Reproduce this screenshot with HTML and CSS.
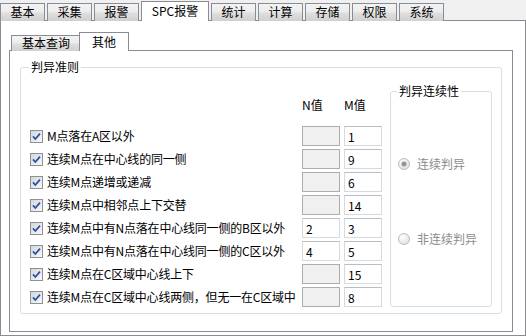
FILE: index.html
```html
<!DOCTYPE html>
<html lang="zh-CN">
<head>
  <meta charset="UTF-8">
  <title>SPC报警</title>
  <link rel="stylesheet" href="styles.css">
</head>
<body>

  <div class="tabs">
    <div class="tab">基本</div>
    <div class="tab">采集</div>
    <div class="tab">报警</div>
    <div class="tab active">SPC报警</div>
    <div class="tab">统计</div>
    <div class="tab">计算</div>
    <div class="tab">存储</div>
    <div class="tab">权限</div>
    <div class="tab">系统</div>
  </div>

  <div class="page">
    <div class="subtabs">
      <div class="tab">基本查询</div>
      <div class="tab active">其他</div>
    </div>

    <div class="subpage">
      <fieldset class="group rules">
        <legend>判异准则</legend>
        <div class="rules-body">

          <div class="rule-list">
            <div class="rule-head">
              <span></span><span>N值</span><span>M值</span>
            </div>

            <div class="rule">
              <label class="rule-label"><span class="check"><svg viewBox="0 0 11 11" width="11" height="11"><path d="M2 5.4 L4.3 8 L9 2.6"/></svg></span>M点落在A区以外</label>
              <input class="num" type="text" disabled>
              <input class="num" type="text" value="1">
            </div>
            <div class="rule">
              <label class="rule-label"><span class="check"><svg viewBox="0 0 11 11" width="11" height="11"><path d="M2 5.4 L4.3 8 L9 2.6"/></svg></span>连续M点在中心线的同一侧</label>
              <input class="num" type="text" disabled>
              <input class="num" type="text" value="9">
            </div>
            <div class="rule">
              <label class="rule-label"><span class="check"><svg viewBox="0 0 11 11" width="11" height="11"><path d="M2 5.4 L4.3 8 L9 2.6"/></svg></span>连续M点递增或递减</label>
              <input class="num" type="text" disabled>
              <input class="num" type="text" value="6">
            </div>
            <div class="rule">
              <label class="rule-label"><span class="check"><svg viewBox="0 0 11 11" width="11" height="11"><path d="M2 5.4 L4.3 8 L9 2.6"/></svg></span>连续M点中相邻点上下交替</label>
              <input class="num" type="text" disabled>
              <input class="num" type="text" value="14">
            </div>
            <div class="rule">
              <label class="rule-label"><span class="check"><svg viewBox="0 0 11 11" width="11" height="11"><path d="M2 5.4 L4.3 8 L9 2.6"/></svg></span>连续M点中有N点落在中心线同一侧的B区以外</label>
              <input class="num" type="text" value="2">
              <input class="num" type="text" value="3">
            </div>
            <div class="rule">
              <label class="rule-label"><span class="check"><svg viewBox="0 0 11 11" width="11" height="11"><path d="M2 5.4 L4.3 8 L9 2.6"/></svg></span>连续M点中有N点落在中心线同一侧的C区以外</label>
              <input class="num" type="text" value="4">
              <input class="num" type="text" value="5">
            </div>
            <div class="rule">
              <label class="rule-label"><span class="check"><svg viewBox="0 0 11 11" width="11" height="11"><path d="M2 5.4 L4.3 8 L9 2.6"/></svg></span>连续M点在C区域中心线上下</label>
              <input class="num" type="text" disabled>
              <input class="num" type="text" value="15">
            </div>
            <div class="rule">
              <label class="rule-label"><span class="check"><svg viewBox="0 0 11 11" width="11" height="11"><path d="M2 5.4 L4.3 8 L9 2.6"/></svg></span>连续M点在C区域中心线两侧，但无一在C区域中</label>
              <input class="num" type="text" disabled>
              <input class="num" type="text" value="8">
            </div>
          </div>

          <fieldset class="group continuity">
            <legend>判异连续性</legend>
            <div class="radio-row first"><span class="radio on"><span class="dot"></span></span>连续判异</div>
            <div class="radio-row"><span class="radio"></span>非连续判异</div>
          </fieldset>

        </div>
      </fieldset>
    </div>
  </div>

</body>
</html>
```

FILE: styles.css
```css
body {
  margin: 0;
  width: 526px;
  height: 336px;
  overflow: hidden;
  background: #f0f0f0;
  font: 12px/14px "Noto Sans CJK SC", "Liberation Sans", sans-serif;
  color: #000;
}

/* tab strips */
.tabs, .subtabs {
  display: flex;
  align-items: flex-end;
}
.tabs {
  height: 21px;
}
.tab {
  box-sizing: border-box;
  width: 45px;
  height: 18px;
  margin-right: 2px;
  padding-bottom: 1px;
  border: 1px solid #898c95;
  border-bottom: 0;
  background: linear-gradient(#f3f3f3, #ececec 45%, #dedede 55%, #d0d0d0);
  display: flex;
  align-items: center;
  justify-content: center;
  white-space: nowrap;
}
.tab.active {
  width: 68px;
  height: 20px;
  background: #fff;
  position: relative;
  z-index: 1;
}

.page {
  box-sizing: border-box;
  height: 316px;
  margin-top: -1px;
  border: 1px solid #898c95;
  background: #fff;
  padding-left: 8px;
}

.subtabs {
  height: 30px;
  padding-left: 2px;
}
.subtabs .tab {
  width: 70px;
  height: 16px;
  margin: 0;
}
.subtabs .tab.active {
  width: 50px;
  height: 19px;
  margin-left: -2px;
}

.subpage {
  box-sizing: border-box;
  width: 504px;
  height: 282px;
  margin-top: -1px;
  border: 1px solid #898c95;
  background: #fff;
  padding-left: 10px;
}

/* group boxes */
.group {
  margin: 0;
  min-width: 0;
  border: 1px solid #d5dfe5;
  border-radius: 3px;
  padding: 0 8px;
}
.group legend {
  padding: 0 2px;
  line-height: 14px;
}
.rules {
  box-sizing: border-box;
  width: 482px;
  margin-top: 9px;
  padding-bottom: 6px;
}
.rules-body {
  display: flex;
  align-items: flex-start;
}

.rule-list {
  width: 353px;
}
.rule-head, .rule {
  display: grid;
  grid-template-columns: 1fr 38px 38px;
  column-gap: 4px;
}
.rule-head {
  margin: 24px 0 14px;
}
.rule {
  height: 20px;
  margin-top: 3px;
  align-items: center;
}
.rule-label {
  display: flex;
  align-items: center;
  white-space: nowrap;
  letter-spacing: -0.2px;
}

.check {
  box-sizing: border-box;
  flex: none;
  width: 13px;
  height: 13px;
  margin: 0 4px 0 1px;
  border: 1px solid #8f9094;
  background: linear-gradient(135deg, #d3d6dc, #f8f8f8);
  display: flex;
}
.check path {
  fill: none;
  stroke: #2a4ea6;
  stroke-width: 1.7;
}

.num {
  box-sizing: border-box;
  width: 38px;
  height: 20px;
  margin: 0;
  padding: 0 0 0 3px;
  border: 1px solid #d4dae0;
  border-top-color: #b9bec4;
  background: #fff;
  font: 12px "Noto Sans CJK SC", "Liberation Sans", sans-serif;
  color: #000;
  outline: none;
}
.num:disabled {
  background: #f0f0f0;
  border-color: #adadad;
}

/* continuity box */
.continuity {
  box-sizing: border-box;
  flex: none;
  width: 102px;
  margin: 10px 0 0 8px;
  padding: 0 6px 59px;
}
.radio-row {
  display: flex;
  align-items: center;
  height: 16px;
  margin-top: 59px;
  color: #8c8c8c;
  white-space: nowrap;
}
.radio-row.first {
  margin-top: 58px;
}
.radio {
  box-sizing: border-box;
  flex: none;
  width: 12px;
  height: 12px;
  margin: 0 7px 0 1px;
  border: 1px solid #bcbcbc;
  border-radius: 50%;
  background: radial-gradient(circle at 35% 30%, #fff, #dadada);
  display: flex;
  align-items: center;
  justify-content: center;
}
.radio .dot {
  width: 4px;
  height: 4px;
  border-radius: 50%;
  background: #8d8d8d;
  box-shadow: 0 0 0 1px #c6c6c6;
}
```
